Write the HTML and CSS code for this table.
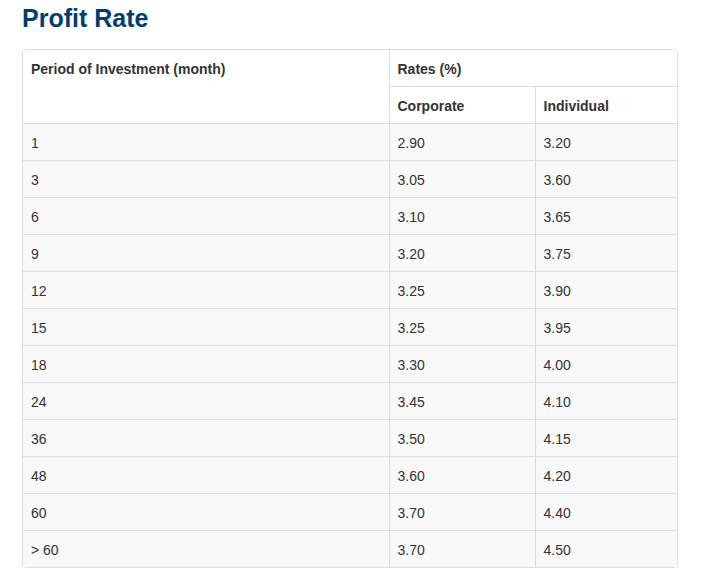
FILE: index.html
```html
<!DOCTYPE html>
<html>
<head>
<meta charset="utf-8">
<link rel="stylesheet" href="styles.css">
</head>
<body>
<div class="page">
  <h1 class="title">Profit Rate</h1>
  <div class="panel">
    <table class="rates">
      <colgroup>
        <col class="c1"><col class="c2"><col class="c3">
      </colgroup>
      <thead>
        <tr>
          <th rowspan="2" class="first">Period of Investment (month)</th>
          <th colspan="2" class="last">Rates (%)</th>
        </tr>
        <tr>
          <th>Corporate</th>
          <th class="last">Individual</th>
        </tr>
      </thead>
      <tbody>
        <tr><td class="first">1</td><td>2.90</td><td class="last">3.20</td></tr>
        <tr><td class="first">3</td><td>3.05</td><td class="last">3.60</td></tr>
        <tr><td class="first">6</td><td>3.10</td><td class="last">3.65</td></tr>
        <tr><td class="first">9</td><td>3.20</td><td class="last">3.75</td></tr>
        <tr><td class="first">12</td><td>3.25</td><td class="last">3.90</td></tr>
        <tr><td class="first">15</td><td>3.25</td><td class="last">3.95</td></tr>
        <tr><td class="first">18</td><td>3.30</td><td class="last">4.00</td></tr>
        <tr><td class="first">24</td><td>3.45</td><td class="last">4.10</td></tr>
        <tr><td class="first">36</td><td>3.50</td><td class="last">4.15</td></tr>
        <tr><td class="first">48</td><td>3.60</td><td class="last">4.20</td></tr>
        <tr><td class="first">60</td><td>3.70</td><td class="last">4.40</td></tr>
        <tr class="end"><td class="first">&gt; 60</td><td>3.70</td><td class="last">4.50</td></tr>
      </tbody>
    </table>
  </div>
</div>
</body>
</html>
```
FILE: styles.css
```css
html, body {
  margin: 0;
  padding: 0;
  background: #fff;
}
body {
  font-family: "Liberation Sans", Arial, sans-serif;
  font-size: 14px;
  color: #333;
}
.page {
  padding: 5px 0 0 22px;
  width: 656px;
}
.title {
  margin: 0 0 17px 0;
  font-size: 25px;
  line-height: 27px;
  font-weight: bold;
  color: #003d73;
}
.panel {
  border: 1px solid #ddd;
  border-radius: 4px;
  overflow: hidden;
}
.rates {
  width: 100%;
  border-collapse: collapse;
  table-layout: fixed;
}
.c1 { width: 366px; }
.c2 { width: 146px; }
.c3 { width: auto; }
.rates th, .rates td {
  border: 1px solid #ddd;
  padding: 1px 8px 0 8px;
  height: 35px;
  text-align: left;
  vertical-align: middle;
  line-height: 20px;
}
.rates th {
  font-weight: bold;
  background: #fff;
}
.rates th.first {
  vertical-align: top;
  padding-top: 9px;
}
.rates td {
  background: #f9f9f9;
}
.rates thead tr:first-child th { border-top: 0; }
.rates .first { border-left: 0; }
.rates .last { border-right: 0; }
.rates tr.end td { border-bottom: 0; }
```
